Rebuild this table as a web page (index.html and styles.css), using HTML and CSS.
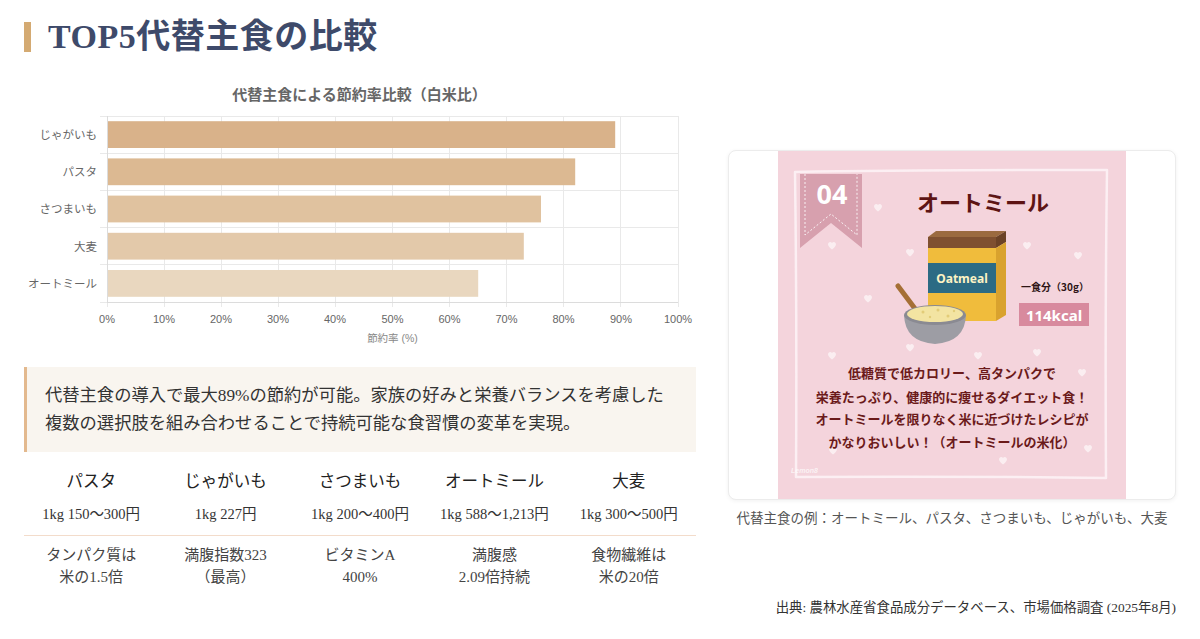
FILE: index.html
```html
<!DOCTYPE html>
<html lang="ja">
<head>
<meta charset="utf-8">
<title>TOP5代替主食の比較</title>
<link rel="stylesheet" href="styles.css">
</head>
<body>
<div class="page">
  <h1 class="title">TOP5代替主食の比較</h1>
  <div class="main">
    <section class="left">
      <svg class="chart" width="672" height="270" viewBox="0 0 672 270">
        <text class="c-title" x="335.5" y="20">代替主食による節約率比較（白米比）</text>
        <g class="grid">
          <line x1="83.5" y1="36" x2="83.5" y2="227"/>
          <line x1="140.5" y1="36" x2="140.5" y2="227"/>
          <line x1="197.5" y1="36" x2="197.5" y2="227"/>
          <line x1="254.5" y1="36" x2="254.5" y2="227"/>
          <line x1="311.5" y1="36" x2="311.5" y2="227"/>
          <line x1="368.5" y1="36" x2="368.5" y2="227"/>
          <line x1="425.5" y1="36" x2="425.5" y2="227"/>
          <line x1="482.5" y1="36" x2="482.5" y2="227"/>
          <line x1="539.5" y1="36" x2="539.5" y2="227"/>
          <line x1="596.5" y1="36" x2="596.5" y2="227"/>
          <line x1="654.5" y1="36" x2="654.5" y2="227"/>
          <line x1="76" y1="36.5" x2="654" y2="36.5"/>
          <line x1="76" y1="73.5" x2="654" y2="73.5"/>
          <line x1="76" y1="110.5" x2="654" y2="110.5"/>
          <line x1="76" y1="147.5" x2="654" y2="147.5"/>
          <line x1="76" y1="184.5" x2="654" y2="184.5"/>
          <line x1="76" y1="222.5" x2="654" y2="222.5"/>
        </g>
        <line class="axis" x1="83.5" y1="36" x2="83.5" y2="222"/>
        <line class="axis" x1="83" y1="222.5" x2="654" y2="222.5"/>
        <rect class="bar1" x="84" y="41.2" width="507.2" height="26.8"/>
        <rect class="bar2" x="84" y="78.4" width="467.2" height="26.8"/>
        <rect class="bar3" x="84" y="115.6" width="433" height="26.8"/>
        <rect class="bar4" x="84" y="152.8" width="415.8" height="26.8"/>
        <rect class="bar5" x="84" y="190" width="370.2" height="26.8"/>
        <text class="c-ylab" x="73" y="59">じゃがいも</text>
        <text class="c-ylab" x="73" y="96">パスタ</text>
        <text class="c-ylab" x="73" y="133">さつまいも</text>
        <text class="c-ylab" x="73" y="170.5">大麦</text>
        <text class="c-ylab" x="73" y="207.5">オートミール</text>
        <text class="c-xlab" x="83" y="243">0%</text>
        <text class="c-xlab" x="140" y="243">10%</text>
        <text class="c-xlab" x="197" y="243">20%</text>
        <text class="c-xlab" x="254" y="243">30%</text>
        <text class="c-xlab" x="311" y="243">40%</text>
        <text class="c-xlab" x="368.5" y="243">50%</text>
        <text class="c-xlab" x="425.5" y="243">60%</text>
        <text class="c-xlab" x="482.5" y="243">70%</text>
        <text class="c-xlab" x="539.5" y="243">80%</text>
        <text class="c-xlab" x="597" y="243">90%</text>
        <text class="c-xlab" x="654" y="243">100%</text>
        <text class="c-axis" x="368.5" y="262">節約率 (%)</text>
      </svg>

      <div class="callout">
        <p>代替主食の導入で最大89%の節約が可能。家族の好みと栄養バランスを考慮した<br>複数の選択肢を組み合わせることで持続可能な食習慣の変革を実現。</p>
      </div>

      <div class="trow thead">
        <div>パスタ</div>
        <div>じゃがいも</div>
        <div>さつまいも</div>
        <div>オートミール</div>
        <div>大麦</div>
      </div>
      <div class="trow tprice">
        <div>1kg 150〜300円</div>
        <div>1kg 227円</div>
        <div>1kg 200〜400円</div>
        <div>1kg 588〜1,213円</div>
        <div>1kg 300〜500円</div>
      </div>
      <div class="trow tfeat">
        <div>タンパク質は<br>米の1.5倍</div>
        <div>満腹指数323<br>（最高）</div>
        <div>ビタミンA<br>400%</div>
        <div>満腹感<br>2.09倍持続</div>
        <div>食物繊維は<br>米の20倍</div>
      </div>
    </section>

    <aside class="right">
      <div class="card">
        <svg class="promo" width="348" height="348" viewBox="0 0 348 348">
          <rect width="348" height="348" fill="#f4d4dc"/>
          <defs>
            <path id="heart" d="M4 7.5C1 5.2 0 3.8 0 2.3 0 1 1 0 2.2 0 3 0 3.6.4 4 1.1 4.4.4 5 0 5.8 0 7 0 8 1 8 2.3 8 3.8 7 5.2 4 7.5Z"/>
          </defs>
          <g class="hearts">
            <use href="#heart" x="96" y="53"/>
            <use href="#heart" x="50" y="91"/>
            <use href="#heart" x="128" y="98"/>
            <use href="#heart" x="245" y="91"/>
            <use href="#heart" x="86" y="144"/>
            <use href="#heart" x="296" y="101"/>
            <use href="#heart" x="128" y="193"/>
            <use href="#heart" x="196" y="201"/>
            <use href="#heart" x="255" y="198"/>
            <use href="#heart" x="50" y="201"/>
            <use href="#heart" x="306" y="294"/>
            <use href="#heart" x="51" y="296"/>
            <use href="#heart" x="221" y="306"/>
            <use href="#heart" x="300" y="218"/>
          </g>
          <path class="frame" d="M17 21 Q120 19 329 19 Q327 160 328 327 Q170 325 18 326 Q19 170 17 21Z"/>
          <polygon class="ribbon" points="22,23 84,23 84,97 53,72 22,97"/>
          <polyline class="ribbon-dash" points="27,23 27,84 53,63 79,84 79,23"/>
          <text class="p-num" x="54" y="53">04</text>
          <text class="p-title" x="205" y="60">オートミール</text>

          <line class="spoon" x1="120" y1="135" x2="141" y2="163"/>
          <polygon fill="#9b6a3f" points="150,86 158,80 228,80 218,86"/>
          <rect fill="#7f5030" x="150" y="86" width="68" height="11"/>
          <polygon fill="#6b4226" points="218,86 228,80 228,91 218,97"/>
          <rect fill="#f0bc3c" x="150" y="97" width="68" height="73"/>
          <polygon fill="#d9a22e" points="218,97 228,91 228,164 218,170"/>
          <rect fill="#2c6b84" x="150" y="112" width="68" height="30"/>
          <text class="p-oat" x="184" y="132">Oatmeal</text>

          <path fill="#9d9da4" d="M126 164Q127 191 157 193Q187 191 188 164Z"/>
          <ellipse fill="#8a8a92" cx="157" cy="164" rx="31" ry="10"/>
          <ellipse fill="#f3e4a2" cx="157" cy="163" rx="28" ry="8"/>
          <g fill="#e2cc78">
            <circle cx="145" cy="161" r="1.5"/>
            <circle cx="160" cy="159" r="1.5"/>
            <circle cx="170" cy="165" r="1.5"/>
            <circle cx="152" cy="166" r="1.2"/>
            <circle cx="176" cy="160" r="1.2"/>
          </g>

          <text class="p-serv" x="277" y="140">一食分（30g）</text>
          <rect fill="#d88a9e" x="241" y="152" width="70" height="23"/>
          <text class="p-kcal" x="276" y="169.5">114kcal</text>

          <text class="p-line" x="174" y="227">低糖質で低カロリー、高タンパクで</text>
          <text class="p-line" x="174" y="251">栄養たっぷり、健康的に痩せるダイエット食！</text>
          <text class="p-line" x="174" y="273">オートミールを限りなく米に近づけたレシピが</text>
          <text class="p-line" x="174" y="296">かなりおいしい！（オートミールの米化）</text>
          <text class="p-logo" x="13" y="322">Lemon8</text>
        </svg>
      </div>
      <p class="caption">代替主食の例：オートミール、パスタ、さつまいも、じゃがいも、大麦</p>
    </aside>
  </div>
  <p class="source">出典: 農林水産省食品成分データベース、市場価格調査 (2025年8月)</p>
</div>
</body>
</html>
```

FILE: styles.css
```css
* { box-sizing: border-box; }

body {
  margin: 0;
  background: #fff;
  font-family: "Liberation Serif", "Noto Sans CJK JP", serif;
  color: #333;
}

.page {
  width: 1200px;
  height: 639px;
  padding: 20px 24px 0;
  overflow: hidden;
}

.title {
  display: flex;
  align-items: center;
  gap: 17px;
  height: 34px;
  margin: 0 0 26px;
  font-size: 34px;
  line-height: 34px;
  font-weight: 700;
  letter-spacing: 0.5px;
  color: #3e4a6a;
}
.title::before {
  content: "";
  width: 7px;
  height: 30px;
  background: #d4aa72;
}

.main {
  display: flex;
  gap: 32px;
  align-items: flex-start;
}

.left { width: 672px; }

/* chart */
.chart { display: block; }
.c-title {
  font: 700 15px "Liberation Serif", "Noto Sans CJK JP", serif;
  fill: #666;
  text-anchor: middle;
}
.c-ylab {
  font: 11.5px "Liberation Sans", "Noto Sans CJK JP", sans-serif;
  fill: #666;
  text-anchor: end;
}
.c-xlab {
  font: 11px "Liberation Sans", "Noto Sans CJK JP", sans-serif;
  fill: #666;
  text-anchor: middle;
}
.c-axis {
  font: 10.5px "Liberation Sans", "Noto Sans CJK JP", sans-serif;
  fill: #888;
  text-anchor: middle;
}
.grid line { stroke: #e9e9e9; stroke-width: 1; }
.axis { stroke: #dcdcdc; stroke-width: 1; }
.bar1 { fill: #d9b28a; }
.bar2 { fill: #dcb992; }
.bar3 { fill: #e0c29f; }
.bar4 { fill: #e3c9aa; }
.bar5 { fill: #e9d7bf; }

/* callout */
.callout {
  margin-top: 17px;
  border-left: 3px solid #e3b98e;
  background: #f9f5ef;
  padding: 14.5px 18px;
  font-size: 17.3px;
  line-height: 28px;
  color: #333;
}
.callout p { margin: 0; }

/* table */
.trow {
  display: grid;
  grid-template-columns: repeat(5, 1fr);
  text-align: center;
}
.thead {
  margin-top: 14px;
  height: 32px;
  line-height: 32px;
  font-size: 16.5px;
  font-weight: 400;
  color: #222;
}
.tprice {
  line-height: 32px;
  padding-bottom: 5px;
  border-bottom: 1px solid #f3dccb;
  font-size: 14.5px;
  color: #333;
}
.tfeat {
  padding-top: 8px;
  line-height: 22px;
  font-size: 15px;
  color: #444;
}

/* right card */
.right {
  width: 448px;
  margin-top: 70px;
}
.card {
  display: flex;
  justify-content: center;
  background: #fff;
  border: 1px solid #ececec;
  border-radius: 8px;
  box-shadow: 0 1px 4px rgba(0, 0, 0, 0.06);
  overflow: hidden;
}
.promo { display: block; }
.hearts use { fill: #fff; opacity: 0.6; }
.frame {
  fill: none;
  stroke: #fdf2f5;
  stroke-width: 2.5;
  stroke-linejoin: round;
  opacity: 0.9;
}
.ribbon { fill: #d7a0ae; }
.ribbon-dash {
  fill: none;
  stroke: #fff;
  stroke-width: 1;
  stroke-dasharray: 2 2;
  opacity: 0.85;
}
.p-num {
  font: 700 27px "Noto Sans", "Liberation Sans", sans-serif;
  fill: #fff;
  text-anchor: middle;
}
.p-title {
  font: 700 22px "Noto Sans CJK JP", sans-serif;
  fill: #5d1414;
  text-anchor: middle;
}
.spoon {
  stroke: #a56f35;
  stroke-width: 5;
  stroke-linecap: round;
}
.p-oat {
  font: 700 12px "Noto Sans", "Liberation Sans", sans-serif;
  fill: #fdf3c4;
  text-anchor: middle;
}
.p-serv {
  font: 700 10px "Noto Sans CJK JP", sans-serif;
  fill: #2e1515;
  text-anchor: middle;
}
.p-kcal {
  font: 700 15px "Noto Sans", "Liberation Sans", sans-serif;
  fill: #fff;
  text-anchor: middle;
}
.p-line {
  font: 700 13px "Noto Sans CJK JP", sans-serif;
  fill: #6b1a1a;
  text-anchor: middle;
}
.p-logo {
  font: italic 700 7px "Liberation Sans", sans-serif;
  fill: #fff;
  opacity: 0.7;
}

.caption {
  margin: 9px 0 0;
  text-align: center;
  font-size: 13.5px;
  line-height: 20px;
  color: #555;
}

.source {
  margin: 10px 0 0;
  text-align: right;
  font-size: 13.4px;
  line-height: 20px;
  color: #333;
}
```
